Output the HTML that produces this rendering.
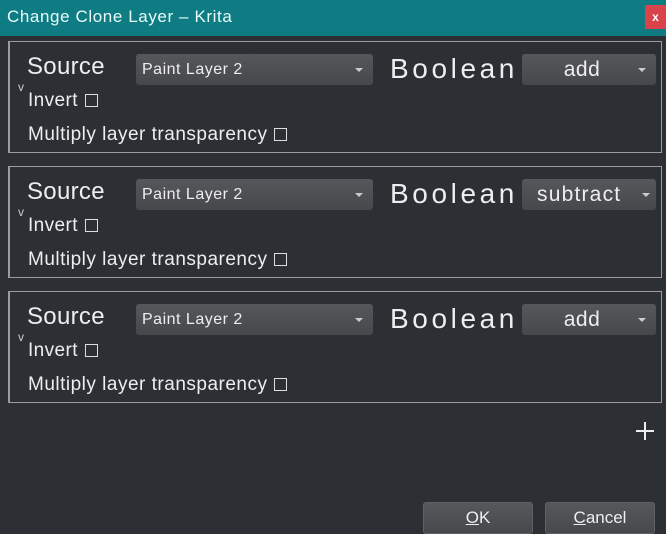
<!DOCTYPE html>
<html><head><style>
body{margin:0;width:666px;height:532px;background:#2c2f34;font-family:"Liberation Sans",sans-serif;color:#eee;position:relative;overflow:hidden}
.title{position:absolute;left:0;top:0;width:666px;height:36px;background:#0f7c83;color:#e8fafa;font-size:17px;letter-spacing:0.6px;line-height:34px;padding-left:7px;box-sizing:border-box}
.x{position:absolute;left:645px;top:5px;width:21px;height:24px;background:#d9434a;color:#fff;font-size:12px;font-weight:bold;text-align:center;line-height:24px}
.p{position:absolute;left:8px;width:654px;height:112px;border:1px solid #9a9c9e;box-sizing:border-box;border-left:2px solid #9a9c9e}
.s{position:absolute;left:17px;top:11px;font-size:24px;letter-spacing:0.3px}
.v{position:absolute;left:8px;top:38px;font-size:12px;color:#ccc}
.inv{position:absolute;left:18px;top:48px;font-size:19px;letter-spacing:0.4px}
.mul{position:absolute;left:18px;top:82px;font-size:19px;letter-spacing:0.5px}
.cb{display:inline-block;width:11px;height:11px;border:1.5px solid #ddd;margin-left:7px;vertical-align:-1px}
.combo{position:absolute;top:12px;height:31px;background:linear-gradient(#55575a,#46484b);border-radius:3px;font-size:16px;letter-spacing:0.5px;line-height:31px;color:#eee;box-sizing:border-box}
.arr{position:absolute;right:10px;top:14px;border-left:4px solid transparent;border-right:4px solid transparent;border-top:4px solid #ccc}
.bo{position:absolute;left:380px;top:11px;font-size:28px;letter-spacing:3.6px}
.btn{position:absolute;top:502px;width:110px;height:32px;background:linear-gradient(#56585b,#46484b);border:1px solid #5e6165;border-radius:3px;box-sizing:border-box;text-align:center;font-size:17px;line-height:30px}
</style></head><body>
<div class="title">Change Clone Layer – Krita</div>
<div class="x">x</div>

<div class="p" style="top:41px">
<div class="s">Source</div><div class="v">v</div>
<div class="combo" style="left:126px;width:237px;padding-left:6px">Paint Layer 2<div class="arr"></div></div>
<div class="bo">Boolean</div>
<div class="combo" style="left:512px;width:134px;text-align:center;font-size:21px;padding-right:14px">add<div class="arr"></div></div>
<div class="inv">Invert<span class="cb"></span></div>
<div class="mul">Multiply layer transparency<span class="cb"></span></div>
</div>

<div class="p" style="top:166px">
<div class="s">Source</div><div class="v">v</div>
<div class="combo" style="left:126px;width:237px;padding-left:6px">Paint Layer 2<div class="arr"></div></div>
<div class="bo">Boolean</div>
<div class="combo" style="left:512px;width:134px;text-align:left;padding-left:15px;font-size:21px;letter-spacing:1.2px">subtract<div class="arr" style="right:6px"></div></div>
<div class="inv">Invert<span class="cb"></span></div>
<div class="mul">Multiply layer transparency<span class="cb"></span></div>
</div>

<div class="p" style="top:291px">
<div class="s">Source</div><div class="v">v</div>
<div class="combo" style="left:126px;width:237px;padding-left:6px">Paint Layer 2<div class="arr"></div></div>
<div class="bo">Boolean</div>
<div class="combo" style="left:512px;width:134px;text-align:center;font-size:21px;padding-right:14px">add<div class="arr"></div></div>
<div class="inv">Invert<span class="cb"></span></div>
<div class="mul">Multiply layer transparency<span class="cb"></span></div>
</div>

<svg style="position:absolute;left:634px;top:420px" width="22" height="22"><path d="M11 2V20M2 11H20" stroke="#eee" stroke-width="2"/></svg>

<div class="btn" style="left:423px"><u>O</u>K</div>
<div class="btn" style="left:545px"><u>C</u>ancel</div>
</body></html>
